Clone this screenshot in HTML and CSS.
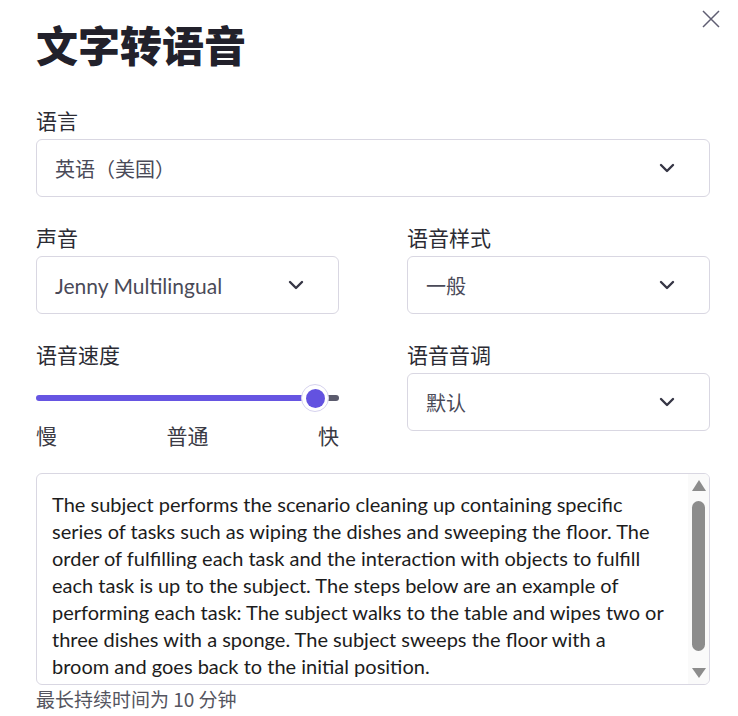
FILE: index.html
```html
<!DOCTYPE html>
<html lang="zh-CN">
<head>
<meta charset="utf-8">
<title>文字转语音</title>
<link rel="stylesheet" href="styles.css">
</head>
<body>
<div class="dialog">
  <button class="close" aria-label="关闭">
    <svg width="20" height="20" viewBox="0 0 20 20"><path d="M2 2 L18 18 M18 2 L2 18" stroke="#5f5e72" stroke-width="1.5" fill="none"/></svg>
  </button>
  <h1 class="title">文字转语音</h1>
  <div class="form">
    <div class="field span2">
      <div class="label">语言</div>
      <div class="select"><span>英语（美国）</span><svg class="chev" width="16" height="10" viewBox="0 0 16 10"><path d="M2 2 L8 8 L14 2" stroke="#363645" stroke-width="2.4" fill="none" stroke-linecap="round" stroke-linejoin="round"/></svg></div>
    </div>
    <div class="field">
      <div class="label">声音</div>
      <div class="select"><span class="latin">Jenny Multilingual</span><svg class="chev" width="16" height="10" viewBox="0 0 16 10"><path d="M2 2 L8 8 L14 2" stroke="#363645" stroke-width="2.4" fill="none" stroke-linecap="round" stroke-linejoin="round"/></svg></div>
    </div>
    <div class="field">
      <div class="label">语音样式</div>
      <div class="select"><span>一般</span><svg class="chev" width="16" height="10" viewBox="0 0 16 10"><path d="M2 2 L8 8 L14 2" stroke="#363645" stroke-width="2.4" fill="none" stroke-linecap="round" stroke-linejoin="round"/></svg></div>
    </div>
    <div class="field">
      <div class="label">语音速度</div>
      <div class="slider">
        <div class="fill"></div>
        <div class="thumb"><div class="dot"></div></div>
        <div class="rest"></div>
      </div>
      <div class="ticks"><span>慢</span><span>普通</span><span>快</span></div>
    </div>
    <div class="field">
      <div class="label">语音音调</div>
      <div class="select"><span>默认</span><svg class="chev" width="16" height="10" viewBox="0 0 16 10"><path d="M2 2 L8 8 L14 2" stroke="#363645" stroke-width="2.4" fill="none" stroke-linecap="round" stroke-linejoin="round"/></svg></div>
    </div>
    <div class="field span2 textfield">
      <div class="textbox">
        <div class="text">The subject performs the scenario cleaning up containing specific
series of tasks such as wiping the dishes and sweeping the floor. The
order of fulfilling each task and the interaction with objects to fulfill
each task is up to the subject. The steps below are an example of
performing each task: The subject walks to the table and wipes two or
three dishes with a sponge. The subject sweeps the floor with a
broom and goes back to the initial position.</div>
        <div class="scrollbar">
          <div class="arrow up"></div>
          <div class="sthumb"></div>
          <div class="arrow down"></div>
        </div>
      </div>
      <div class="hint">最长持续时间为 10 分钟</div>
    </div>
  </div>
</div>
</body>
</html>
```

FILE: styles.css
```css
* { box-sizing: border-box; }
html, body { margin: 0; padding: 0; background: #ffffff; }
body {
  font-family: Lato, "Noto Sans CJK SC", sans-serif;
  color: #2b2b33;
}
.dialog {
  position: relative;
  width: 738px;
  height: 716px;
  padding: 16px 28px 0 36px;
  overflow: hidden;
}
.close {
  position: absolute;
  top: 8px;
  right: 16px;
  width: 22px;
  height: 22px;
  padding: 0;
  border: 0;
  background: transparent;
  display: flex;
  align-items: center;
  justify-content: center;
}
.title {
  margin: 0 0 34px 0;
  font-family: "Noto Sans CJK SC", sans-serif;
  font-size: 42px;
  font-weight: 900;
  line-height: 56px;
  color: #22212b;
}
.form {
  display: grid;
  grid-template-columns: 1fr 1fr;
  column-gap: 68px;
  row-gap: 26px;
  align-items: start;
}
.span2 { grid-column: span 2; }
.field {
  display: flex;
  flex-direction: column;
  gap: 5px;
}
.label {
  font-family: "Noto Sans CJK SC", sans-serif;
  font-size: 21px;
  line-height: 28px;
  color: #2b2b33;
}
.select {
  height: 58px;
  border: 1px solid #d9d7e2;
  border-radius: 6px;
  padding: 0 34px 0 18px;
  display: flex;
  align-items: center;
  justify-content: space-between;
  font-family: "Noto Sans CJK SC", sans-serif;
  font-size: 20px;
  color: #4a4a58;
}
.select .latin { font-family: Lato, sans-serif; font-size: 21px; }
.chev { flex: none; }
.slider {
  height: 50px;
  display: flex;
  align-items: center;
}
.fill {
  flex: 1;
  height: 6px;
  border-radius: 3px 0 0 3px;
  background: #6655e2;
}
.rest {
  width: 14px;
  height: 6px;
  border-radius: 0 3px 3px 0;
  background: #5b5b6d;
}
.thumb {
  position: relative;
  z-index: 1;
  width: 28px;
  height: 28px;
  margin: 0 -4px;
  border-radius: 50%;
  background: #ffffff;
  border: 1px solid #d6d2ee;
  display: flex;
  align-items: center;
  justify-content: center;
}
.dot {
  width: 19px;
  height: 19px;
  border-radius: 50%;
  background: #6352e0;
}
.ticks {
  margin-top: -5px;
  display: flex;
  justify-content: space-between;
  font-family: "Noto Sans CJK SC", sans-serif;
  font-size: 21px;
  line-height: 24px;
  color: #3a3a44;
}
.textfield { gap: 2px; }
.textbox {
  height: 212px;
  border: 1px solid #d9d7e2;
  border-radius: 6px;
  display: flex;
  overflow: hidden;
}
.text {
  flex: 1;
  padding: 17px 6px 0 15px;
  white-space: pre-line;
  font-family: Lato, sans-serif;
  font-size: 20px;
  line-height: 27px;
  color: #1c1c1c;
  overflow: hidden;
}
.scrollbar {
  width: 21px;
  background: #fafafa;
  display: flex;
  flex-direction: column;
  align-items: center;
  padding: 6px 0 6px 0;
}
.arrow {
  width: 0;
  height: 0;
  border-left: 7px solid transparent;
  border-right: 7px solid transparent;
}
.arrow.up { border-bottom: 11px solid #8c8c8c; }
.arrow.down { border-top: 10px solid #8c8c8c; margin-top: auto; }
.sthumb {
  margin-top: 10px;
  width: 13px;
  height: 150px;
  border-radius: 7px;
  background: #8c8c8c;
}
.hint {
  font-family: "Noto Sans CJK SC", sans-serif;
  font-size: 19px;
  line-height: 24px;
  color: #555560;
}
```
